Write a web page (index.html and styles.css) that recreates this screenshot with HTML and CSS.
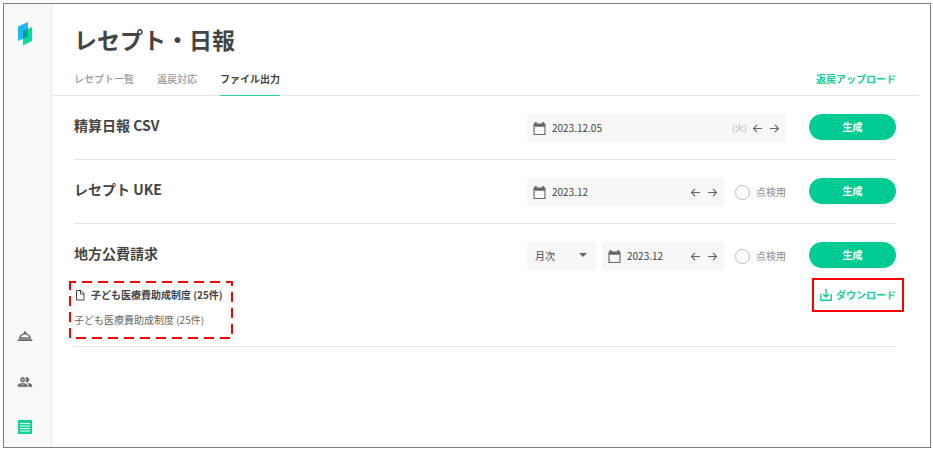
FILE: index.html
```html
<!DOCTYPE html>
<html lang="ja">
<head>
  <meta charset="UTF-8">
  <meta name="viewport" content="width=device-width, initial-scale=1">
  <title>レセプト・日報</title>
  <link rel="stylesheet" href="styles.css">
</head>

<body>
  <svg class="sprite" aria-hidden="true">
    <symbol id="calendar" viewBox="0 0 14 14"><path d="M2 0h2v1.500h6V0h2v1.500h1.500V14H.5V1.500H2zM1.700 5v7.800h10.600V5z" fill-rule="evenodd"/></symbol>
    <symbol id="arrow-left" viewBox="0 0 12 12"><path d="M11 6H2M5.500 2L1.700 6l3.800 4" fill="none" stroke="currentColor" stroke-width="1.300"/></symbol>
    <symbol id="arrow-right" viewBox="0 0 12 12"><path d="M1 6h9M6.500 2l3.800 4-3.800 4" fill="none" stroke="currentColor" stroke-width="1.300"/></symbol>
  </svg>

  <div class="app">
    <nav class="sidebar">
      <a href="#" class="logo" aria-label="ホーム">
        <svg viewBox="0 0 14 24" width="14" height="24">
          <path d="M0 4.500L10 0v14.500L0 19z" fill="#1cb8f8"/>
          <path d="M5 9l9-4v14L5 23.500z" fill="#06dc9b"/>
          <path d="M5 9l5-2.200v7.700L5 16.800z" fill="#0a9d94"/>
        </svg>
      </a>
      <a href="#" class="side-link" aria-label="受付">
        <svg viewBox="0 0 24 24" width="16" height="16"><path d="M1 17h22v2.500H1zM13.840 7.790c.1-.24.16-.51.16-.79 0-1.100-.9-2-2-2s-2 .9-2 2c0 .28.060.55.160.79C6.250 8.600 3.270 11.930 3 16h18c-.27-4.070-3.250-7.400-7.160-8.210zM12 9.800c3.100 0 5.300 1.500 6.300 4.200H5.700c1-2.700 3.200-4.200 6.300-4.200z"/></svg>
      </a>
      <a href="#" class="side-link" aria-label="患者">
        <svg viewBox="1 0 23 24" width="16" height="16"><path d="M9 13.750c-2.340 0-7 1.170-7 3.500V19h14v-1.750c0-2.330-4.660-3.500-7-3.500zM4.340 17c.84-.58 2.870-1.250 4.660-1.250s3.820.67 4.660 1.250H4.340zM9 12c1.930 0 3.500-1.570 3.500-3.500S10.930 5 9 5 5.500 6.570 5.500 8.500 7.070 12 9 12zm0-5c.83 0 1.500.67 1.500 1.500S9.830 10 9 10s-1.500-.67-1.500-1.500S8.170 7 9 7zm7.040 6.810c1.160.84 1.960 1.960 1.960 3.440V19h5v-1.750c0-2.020-3.500-3.170-6.960-3.440zM15 12c1.930 0 3.500-1.570 3.500-3.500S16.930 5 15 5c-.54 0-1.040.13-1.500.35.63.89 1 1.980 1 3.150s-.37 2.260-1 3.150c.46.22.96.35 1.500.35z" stroke="currentColor" stroke-width=".5"/></svg>
      </a>
      <a href="#" class="side-link active" aria-label="レセプト・日報">
        <svg viewBox="0 0 14 14" width="14" height="14">
          <path d="M0 0h14v14H0z"/>
          <path d="M2 3.500h10M2 6h10M2 8.500h10M2 11h10" stroke="#f9f9f9" stroke-width="1.200"/>
        </svg>
      </a>
    </nav>

    <main class="main">
      <h1 class="title">レセプト・日報</h1>

      <div class="tab-bar">
        <a href="#" class="tab">レセプト一覧</a>
        <a href="#" class="tab">返戻対応</a>
        <a href="#" class="tab active">ファイル出力</a>
        <a href="#" class="upload-link">返戻アップロード</a>
      </div>

      <div class="content">
        <section class="section">
          <div class="row">
            <h2>精算日報 CSV</h2>
            <div class="controls">
              <div class="date-field">
                <svg class="icon"><use href="#calendar"/></svg>
                <input type="text" value="2023.12.05" aria-label="精算日">
                <span class="weekday">(火)</span>
                <button class="arrow" aria-label="前日"><svg><use href="#arrow-left"/></svg></button>
                <button class="arrow" aria-label="翌日"><svg><use href="#arrow-right"/></svg></button>
              </div>
            </div>
            <button class="generate">生成</button>
          </div>
        </section>

        <section class="section">
          <div class="row">
            <h2>レセプト UKE</h2>
            <div class="controls">
              <div class="date-field">
                <svg class="icon"><use href="#calendar"/></svg>
                <input type="text" value="2023.12" aria-label="レセプト対象月">
                <button class="arrow" aria-label="前月"><svg><use href="#arrow-left"/></svg></button>
                <button class="arrow" aria-label="翌月"><svg><use href="#arrow-right"/></svg></button>
              </div>
              <label class="check"><input type="checkbox">点検用</label>
            </div>
            <button class="generate">生成</button>
          </div>
        </section>

        <section class="section">
          <div class="row">
            <h2>地方公費請求</h2>
            <div class="controls">
              <div class="select-field">
                <select aria-label="請求単位">
                  <option>月次</option>
                </select>
              </div>
              <div class="date-field">
                <svg class="icon"><use href="#calendar"/></svg>
                <input type="text" value="2023.12" aria-label="請求対象月">
                <button class="arrow" aria-label="前月"><svg><use href="#arrow-left"/></svg></button>
                <button class="arrow" aria-label="翌月"><svg><use href="#arrow-right"/></svg></button>
              </div>
              <label class="check"><input type="checkbox">点検用</label>
            </div>
            <button class="generate">生成</button>
          </div>

          <div class="files">
            <div class="file">
              <p class="file-name">
                <svg viewBox="0 0 12 12" width="12" height="12"><path d="M2.500 1.500h4.500l3 3v6.500H2.500zM6.500 1.500v3.500H10" fill="none" stroke="currentColor"/></svg>
                子ども医療費助成制度 (25件)
              </p>
              <p class="file-detail">子ども医療費助成制度 (25件)</p>
              <svg class="mark-dashed" aria-hidden="true"><rect x="1" y="1" width="162" height="56"/></svg>
            </div>
            <a href="#" class="download">
              <svg viewBox="0 0 12 12" width="12" height="12"><path d="M.8 5v6.200h10.400V5M6 0v8M3 5l3 3 3-3" fill="none" stroke="currentColor" stroke-width="1.400"/></svg>
              ダウンロード
              <span class="mark-solid"></span>
            </a>
          </div>
        </section>
      </div>
    </main>
  </div>
</body>
</html>
```

FILE: styles.css
```css
* {
  box-sizing: border-box;
}

body {
  margin: 0;
  padding: 3px 2px 2px 3px;
  background-color: #fff;
  color: #444;
  font-family: 'Noto Sans CJK JP', sans-serif;
  font-size: 10px;
  line-height: 16px;
}

h1, h2, p {
  margin: 0;
}

a {
  color: inherit;
  text-decoration: none;
}

button, input, select {
  font: inherit;
  color: inherit;
  border: none;
  background: none;
  padding: 0;
  margin: 0;
}

button {
  cursor: pointer;
}

svg {
  fill: currentColor;
}

.sprite {
  display: none;
}

.app {
  display: flex;
  min-height: calc(100vh - 5px);
  border: 1px solid #7f7f7f;
}

.sidebar {
  display: flex;
  flex-direction: column;
  align-items: center;
  gap: 30px;
  width: 48px;
  padding: 18px 5px 11px 0;
  background-color: #f9f9f9;
  border-right: 1px solid #e6e6e6;
  color: #666;
}

.logo {
  margin-bottom: auto;
}

.side-link {
  display: flex;
  justify-content: center;
  height: 16px;
}

.side-link.active {
  color: #10d197;
}

.main {
  flex: 1;
  min-width: 0;
}

.title {
  padding: 17px 22px 0;
  font-size: 23px;
  font-weight: 700;
  line-height: 36px;
}

.tab-bar {
  display: flex;
  gap: 23px;
  height: 39px;
  margin-right: 11px;
  padding: 14px 23px 0 22px;
  border-bottom: 1px solid #e4e4e4;
}

.tab {
  height: 25px;
  color: #999;
  font-weight: 500;
}

.tab.active {
  color: #444;
  font-weight: 700;
  border-bottom: 1px solid #2ccf9f;
}

.upload-link {
  margin-left: auto;
  color: #14cc94;
  font-weight: 700;
}

.content {
  padding: 0 34px 0 22px;
}

.section {
  padding: 18px 0 17px;
  border-bottom: 1px solid #e4e4e4;
}

.row {
  display: flex;
  align-items: flex-start;
  gap: 23px;
  height: 28px;
}

.row h2 {
  flex: 1;
  font-size: 14px;
  font-weight: 700;
  line-height: 22px;
}

.controls {
  display: flex;
  align-items: center;
  width: 259px;
  gap: 6px;
}

.date-field {
  display: flex;
  flex: 1;
  align-items: center;
  height: 28px;
  min-width: 0;
  padding: 0 3px 0 6px;
  border-radius: 2px;
  background-color: #f7f7f7;
}

.date-field input {
  flex: 1;
  min-width: 0;
  margin-left: 6px;
}

.icon {
  width: 13px;
  height: 13px;
  color: #666;
}

.weekday {
  margin-right: 2px;
  color: #aaa;
  font-size: 9px;
}

.arrow {
  display: flex;
  align-items: center;
  justify-content: center;
  width: 17px;
  height: 17px;
  color: #666;
}

.arrow svg {
  width: 11px;
  height: 11px;
}

.check {
  display: flex;
  align-items: center;
  gap: 6px;
  margin-left: 5px;
  color: #888;
}

.check input {
  appearance: none;
  width: 15px;
  height: 15px;
  border: 1px solid #bbb;
  border-radius: 50%;
  background-color: #fff;
}

.select-field {
  position: relative;
  width: 69px;
  height: 28px;
  border-radius: 2px;
  background-color: #f7f7f7;
}

.select-field select {
  appearance: none;
  width: 100%;
  height: 28px;
  padding-left: 8px;
}

.select-field::after {
  content: '';
  position: absolute;
  top: 11px;
  right: 9px;
  border: 4px solid transparent;
  border-top-color: #666;
  border-bottom: none;
  pointer-events: none;
}

.generate {
  width: 87px;
  height: 26px;
  border-radius: 13px;
  background-color: #00cc92;
  color: #fff;
  font-weight: 700;
}

.files {
  display: flex;
  justify-content: space-between;
  align-items: flex-start;
  padding: 17px 0 1px;
}

.file {
  position: relative;
}

.file-name {
  display: flex;
  align-items: center;
  gap: 5px;
  font-weight: 700;
}

.file-detail {
  margin-top: 9px;
  color: #666;
}

.download {
  position: relative;
  display: flex;
  align-items: center;
  gap: 4px;
  color: #14cc94;
  font-weight: 700;
}

.mark-dashed {
  position: absolute;
  top: -6px;
  left: -5px;
  width: 164px;
  height: 58px;
  fill: none;
  stroke: #f00;
  stroke-width: 2;
  stroke-dasharray: 10 6;
  stroke-dashoffset: 4;
}

.mark-solid {
  position: absolute;
  inset: -9px -8px;
  border: 2px solid #f00;
}
```
